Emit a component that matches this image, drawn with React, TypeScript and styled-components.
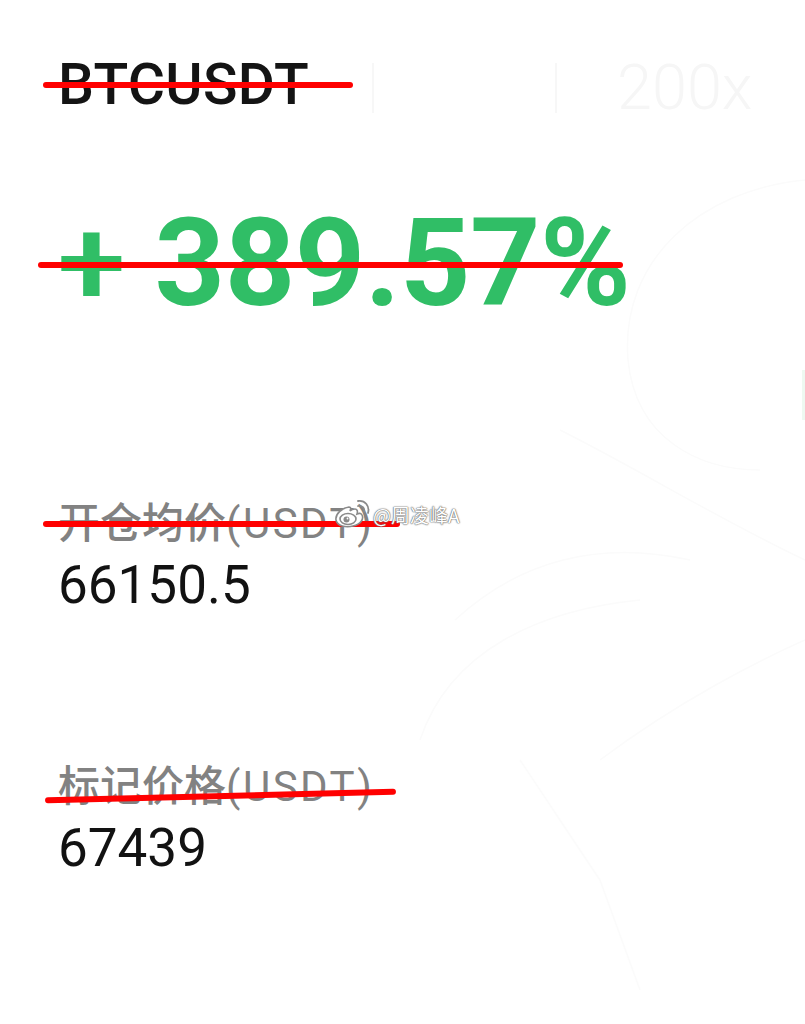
import React from "react";
import styled, { createGlobalStyle } from "styled-components";

const Global = createGlobalStyle`
  html, body { margin: 0; padding: 0; background: #ffffff; }
  body { width: 805px; height: 1024px; overflow: hidden; }
  #root { width: 805px; height: 1024px; }
`;

const Page = styled.div`
  position: relative;
  width: 805px;
  height: 1024px;
  box-sizing: border-box;
  padding: 56px 0 0 58px;
  display: flex;
  flex-direction: column;
  background: #ffffff;
  font-family: Roboto, "Noto Sans CJK SC", sans-serif;
  overflow: hidden;
`;

const Backdrop = styled.svg`
  position: absolute;
  left: 0;
  top: 0;
  width: 805px;
  height: 1024px;
  pointer-events: none;
`;

const Header = styled.div`
  display: grid;
  grid-template-columns: 314px 183px 62px auto;
  align-items: center;
  height: 57px;
`;

const Struck = styled.div<{ $mt?: number }>`
  position: relative;
  align-self: flex-start;
  margin-top: ${(p) => p.$mt ?? 0}px;
`;

const StrikeLine = styled.span<{ $left: number; $top: number; $width: number; $angle?: number }>`
  position: absolute;
  left: ${(p) => p.$left}px;
  top: ${(p) => p.$top}px;
  width: ${(p) => p.$width}px;
  height: 6px;
  border-radius: 3px;
  background: #ff0000;
  transform: rotate(${(p) => p.$angle ?? 0}deg);
  transform-origin: center;
`;

const Symbol = styled.div`
  font-size: 57px;
  line-height: 1;
  font-weight: 500;
  color: #141414;
  letter-spacing: 0.3px;
`;

const FaintBar = styled.span`
  display: block;
  width: 2px;
  height: 50px;
  background: #f7f7f7;
`;

const Leverage = styled.span`
  font-size: 63px;
  line-height: 1;
  font-weight: 300;
  color: #f6f6f6;
`;

const Percent = styled.div`
  font-size: 123px;
  line-height: 1;
  font-weight: 700;
  color: #30be66;
  letter-spacing: -0.5px;
  white-space: pre;
`;

const Field = styled.div<{ $gap: number }>`
  margin-top: ${(p) => p.$gap}px;
  display: flex;
  flex-direction: column;
  gap: 14px;
`;

const Label = styled.div`
  font-size: 42px;
  line-height: 1;
  color: #828282;
  font-weight: 500;
  font-family: Roboto, "Noto Sans CJK SC", sans-serif;
`;

const Unit = styled.span`
  letter-spacing: 2.5px;
  font-weight: 400;
`;

const Value = styled.div`
  font-size: 53px;
  line-height: 1;
  color: #121212;
  font-weight: 400;
`;

const Watermark = styled.div`
  position: absolute;
  left: 333px;
  top: 499px;
  display: flex;
  align-items: center;
  gap: 2px;
`;

const WatermarkText = styled.span`
  font-family: "Noto Sans CJK SC", sans-serif;
  font-size: 19px;
  line-height: 1;
  color: #ffffff;
  text-shadow: 0 0 1px #666, 0 0 1px #666, 0 0 2px #888;
`;

const WeiboLogo = () => (
  <svg width="38" height="30" viewBox="0 0 38 30">
    <g fill="#ffffff" stroke="#8a8a8a" strokeWidth="1.6">
      <path d="M16 8 C 9 9, 2 15, 3 21 C 4 27, 13 29, 20 27 C 28 25, 31 20, 29 16 C 28 14, 26 14, 24 15 C 25 12, 24 10, 22 10 C 20 10, 18 11, 17 12 C 18 9, 18 8, 16 8 Z" />
      <ellipse cx="15" cy="20" rx="8" ry="5.5" />
    </g>
    <circle cx="13.5" cy="20.5" r="3" fill="#8a8a8a" />
    <circle cx="14.5" cy="19.5" r="0.9" fill="#ffffff" />
    <g fill="none" stroke="#8a8a8a" strokeWidth="1.8" strokeLinecap="round">
      <path d="M25 7 C 29 6, 32 9, 31 13" />
      <path d="M25 2 C 32 1, 37 7, 35 14" />
    </g>
  </svg>
);

export default function App() {
  return (
    <>
      <Global />
      <Page>
        <Backdrop viewBox="0 0 805 1024">
          <g fill="none" stroke="#fbfbfb" strokeWidth="1.5">
            <path d="M 805 180 C 700 190, 620 260, 628 360 C 636 440, 700 470, 760 470" />
            <path d="M 560 430 C 640 470, 720 520, 805 560" />
            <path d="M 455 620 C 520 560, 600 540, 690 560" />
            <path d="M 420 740 C 450 650, 540 610, 640 600" />
            <path d="M 520 760 L 600 880 L 640 990" />
            <path d="M 600 760 C 680 700, 760 660, 805 640" />
          </g>
          <rect x="802" y="370" width="3" height="50" fill="#eef8f1" />
        </Backdrop>
        <Header>
          <Struck>
            <Symbol>BTCUSDT</Symbol>
            <StrikeLine $left={-15} $top={26} $width={310} />
          </Struck>
          <FaintBar />
          <FaintBar />
          <Leverage>200x</Leverage>
        </Header>
        <Struck $mt={89}>
          <Percent>{"+ 389.57%"}</Percent>
          <StrikeLine $left={-20} $top={60} $width={585} />
        </Struck>
        <Field $gap={178}>
          <Struck>
            <Label>
              开仓均价<Unit>(USDT)</Unit>
            </Label>
            <StrikeLine $left={-15} $top={18} $width={357} />
          </Struck>
          <Value>66150.5</Value>
        </Field>
        <Field $gap={154}>
          <Struck>
            <Label>
              标记价格<Unit>(USDT)</Unit>
            </Label>
            <StrikeLine $left={-13} $top={27} $width={351} $angle={-1.4} />
          </Struck>
          <Value>67439</Value>
        </Field>
        <Watermark>
          <WeiboLogo />
          <WatermarkText>@周凌峰A</WatermarkText>
        </Watermark>
      </Page>
    </>
  );
}
